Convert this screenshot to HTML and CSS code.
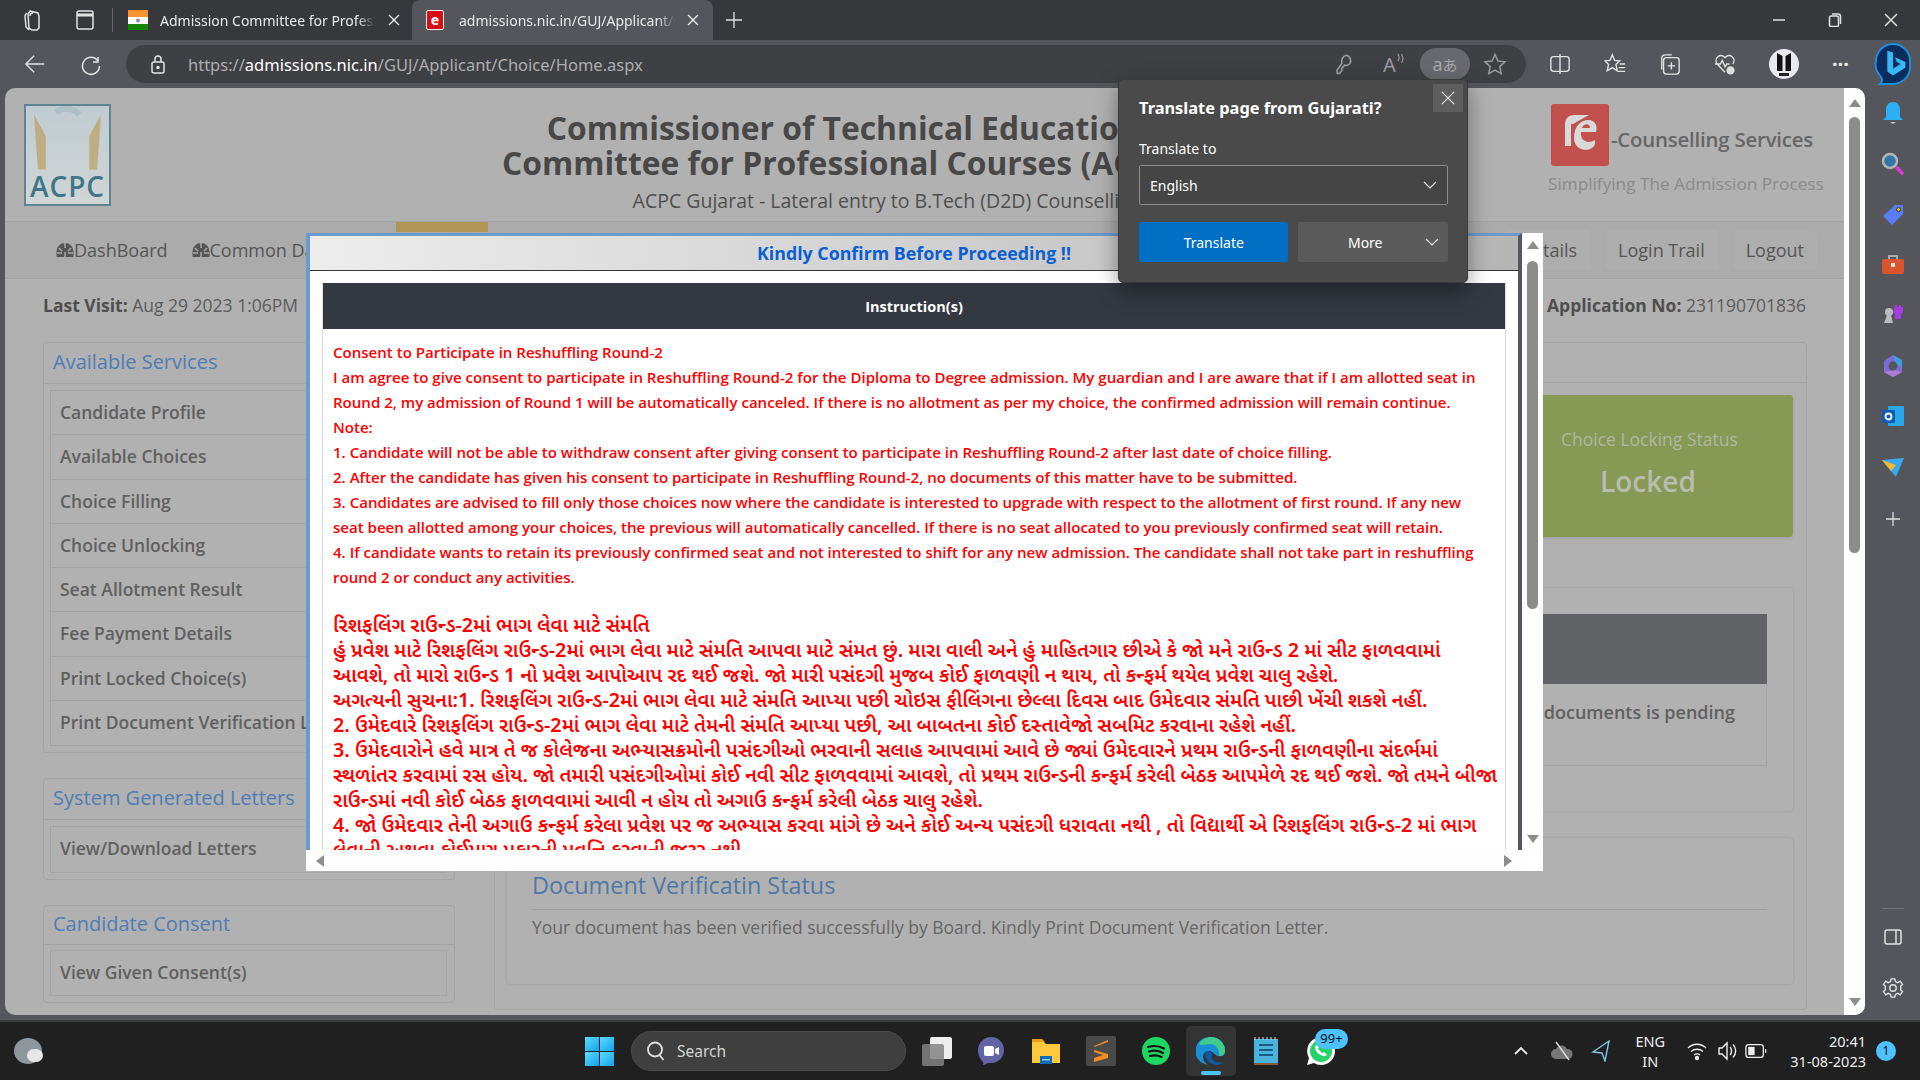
FILE: index.html
```html
<!DOCTYPE html>
<html lang="en">
<head>
<meta charset="utf-8">
<title>admissions.nic.in</title>
<link rel="stylesheet" href="styles.css">
</head>
<body>
<div class="desktop">
  <div class="tabstrip">
    <svg class="ico tab-ico1" viewBox="0 0 24 24"><path d="M10 3l8 2 1 3v12l-2 2h-5l-3-2-1-14zM6.500 5L5 8l1 11 3 3M13 5c-2 0-3 1-3 3"/></svg>
    <svg class="ico tab-ico2" viewBox="0 0 24 24"><rect x="4" y="3" width="16" height="18" rx="2"/><path d="M4 7h16" stroke-width="3"/></svg>
    <span class="tab-sep"></span>
    <div class="tab">
      <svg class="favicon" viewBox="0 0 20 20"><rect width="20" height="7" fill="#f59331"/><rect y="7" width="20" height="7" fill="#fff"/><rect y="14" width="20" height="6" fill="#138808"/><circle cx="10" cy="10.500" r="2" fill="#8a8ac0"/></svg>
      <span class="tab-title">Admission Committee for Professional</span>
      <svg class="tab-x" viewBox="0 0 12 12"><path d="M1 1l10 10M11 1L1 11"/></svg>
    </div>
    <div class="tab tab-active">
      <span class="e-fav">e</span>
      <span class="tab-title">admissions.nic.in/GUJ/Applicant/Choice</span>
      <svg class="tab-x" viewBox="0 0 12 12"><path d="M1 1l10 10M11 1L1 11"/></svg>
    </div>
    <svg class="ico new-tab" viewBox="0 0 20 20"><path d="M10 1v18M1 10h18"/></svg>
    <div class="win-ctrl">
      <svg class="ico" viewBox="0 0 14 14"><path d="M1 7h12"/></svg>
      <svg class="ico" viewBox="0 0 14 14"><rect x="1.500" y="3" width="9" height="10.500" rx="1.500"/><path d="M4 1h6c2 0 2.500 1 2.500 2.500V11"/></svg>
      <svg class="ico" viewBox="0 0 14 14"><path d="M1 1l12 12M13 1L1 13"/></svg>
    </div>
  </div>

  <div class="toolbar">
    <svg class="ico tb-back" viewBox="0 0 24 24"><path d="M22 12H3M11 3l-9 9 9 9"/></svg>
    <svg class="ico tb-refresh" viewBox="0 0 24 24"><path d="M19 5v5h-5M19 9a8.500 8.500 0 1 0 1.500 5"/></svg>
    <div class="addressbar">
      <svg class="ico lock" viewBox="0 0 20 20"><rect x="4" y="8" width="12" height="11" rx="2"/><path d="M7 8V5a3 3 0 0 1 6 0v3"/><circle cx="10" cy="13.500" r="1" fill="#ddd"/></svg>
      <span class="url">https://<b>admissions.nic.in</b>/GUJ/Applicant/Choice/Home.aspx</span>
      <svg class="ico dim key" viewBox="0 0 20 20"><path d="M12 2a5 5 0 0 1 3 8c-1 1-3 1.500-4.500 1L8 14v2l-2 2.500H4l-.5-2.500L8 9.500C7.500 6 9 3 12 2z"/></svg>
      <span class="readaloud">A<svg class="ra-waves" viewBox="0 0 10 12"><path d="M2 1c2 2 2 6 0 8M6 1c2 3 2 7 0 10"/></svg></span>
      <span class="translate-pill">a<span class="cjk">あ</span></span>
      <svg class="ico dim star" viewBox="0 0 24 24"><path d="M12 2.500l3 6.500 7 .8-5.200 4.800 1.400 7-6.200-3.600-6.200 3.600 1.400-7L2 9.800 9 9z"/></svg>
    </div>
    <div class="tb-right">
      <svg class="ico" viewBox="0 0 24 24"><rect x="2" y="4" width="20" height="16" rx="3"/><path d="M12 1v22"/></svg>
      <svg class="ico" viewBox="0 0 24 24"><path d="M9 2l2.500 6 5.500.5-4 4 1.500 7L9 16l-5.500 3.500 1.500-7-4-4L6.500 8zM17 12h6M16 16h7M15 20h8"/></svg>
      <svg class="ico" viewBox="0 0 24 24"><rect x="5" y="5" width="17" height="18" rx="3"/><path d="M3 18V6c0-2 1-4 4-4h7M13.500 10v8M9.500 14h8"/></svg>
      <svg class="ico" viewBox="0 0 24 24"><path d="M12 21L3.500 12C-1 6 7 -1 12 5c5-6 13 1 8.500 7M1 12h6l2-4 3 7 2-3h3"/><circle cx="18" cy="19" r="4.500" fill="#ddd" stroke="none"/></svg>
      <svg class="avatar" viewBox="0 0 30 30"><circle cx="15" cy="15" r="15" fill="#e8e8ee"/><path d="M8 4l5.500 3v15H8zM22 4l-5.500 3v15H22z" fill="#111"/><rect x="10" y="24" width="10" height="3" fill="#222"/></svg>
      <span class="dots">···</span>
      <svg class="bing" viewBox="0 0 40 46"><path d="M20 2a18 18 0 0 1 18 18v6a18 18 0 0 1-18 18H6c3-2 3-5 1-8a18 18 0 0 1-5-16A18 18 0 0 1 20 2z" fill="#0b2d5e" stroke="#1d8fe0" stroke-width="2"/><path d="M14 9l6 2v17l8-5-4-2-2-5 11 5v6l-13 8-6-4z" fill="#35b8f5"/></svg>
    </div>
  </div>

  <div class="main">
    <div class="page">
      <div class="page-content">
        <header class="site-header">
          <div class="acpc-logo">
            <svg class="acpc-art" viewBox="0 0 84 64"><path d="M8 8l12 22v34h-8z M76 8L64 30v34h8z" fill="#bfae84"/><path d="M30 6c8-6 18-4 24 2" fill="none" stroke="#aebfc8" stroke-width="6"/></svg>
            <span class="acpc-text">ACPC</span>
          </div>
          <div class="site-title">
            <h1>Commissioner of Technical Education, Gujarat<br>Committee for Professional Courses (ACPC), Gujarat</h1>
            <p>ACPC Gujarat - Lateral entry to B.Tech (D2D) Counselling 2023</p>
          </div>
          <div class="ec-logo">
            <div class="ec-row">
              <svg class="ec-mark" viewBox="0 0 58 62"><rect width="58" height="62" rx="3" fill="#c2504c"/><path d="M14 42V20c0-6 4-9 10-9h14l-16 9h-2v22z" fill="#d9d9d9"/><path d="M44 40c-3 9-21 8-21-6 0-13 8-18 14-18 7 0 10 6 8 12H30c-1 10 8 12 14 8zM31 24h8c0-5-6-5-8 0z" fill="#d9d9d9"/></svg>
              <span class="ec-name">-Counselling Services</span>
            </div>
            <div class="ec-tag">Simplifying The Admission Process</div>
          </div>
        </header>
        <nav class="site-nav">
          <span class="tan-strip"></span>
          <a class="nav-link"><svg class="gauge" viewBox="0 0 18 16"><path d="M9 1a8.500 8.500 0 0 0-8.500 8.500V15h17V9.500A8.500 8.500 0 0 0 9 1z" fill="#555"/><path d="M9 1v5M3 6l3 3M15 6l-3 3M1 11h5M12 11h5M9 10v5" stroke="#aaa" stroke-width="1.500"/></svg>DashBoard</a>
          <a class="nav-link"><svg class="gauge" viewBox="0 0 18 16"><path d="M9 1a8.500 8.500 0 0 0-8.500 8.500V15h17V9.500A8.500 8.500 0 0 0 9 1z" fill="#555"/><path d="M9 1v5M3 6l3 3M15 6l-3 3M1 11h5M12 11h5M9 10v5" stroke="#aaa" stroke-width="1.500"/></svg>Common Dashboard</a>
          <span class="nav-spacer"></span>
          <a class="nav-btn">Details</a>
          <a class="nav-btn">Login Trail</a>
          <a class="nav-btn">Logout</a>
        </nav>
        <div class="visit-row">
          <span><b>Last Visit:</b> Aug 29 2023 1:06PM</span>
          <span><b>Application No:</b> 231190701836</span>
        </div>
        <div class="columns">
          <aside class="left-col">
            <section class="panel">
              <h3>Available Services</h3>
              <ul class="svc">
                <li>Candidate Profile</li>
                <li>Available Choices</li>
                <li>Choice Filling</li>
                <li>Choice Unlocking</li>
                <li>Seat Allotment Result</li>
                <li>Fee Payment Details</li>
                <li>Print Locked Choice(s)</li>
                <li>Print Document Verification Letter</li>
              </ul>
            </section>
            <section class="panel">
              <h3>System Generated Letters</h3>
              <ul class="svc"><li>View/Download Letters</li></ul>
            </section>
            <section class="panel panel-last">
              <h3>Candidate Consent</h3>
              <ul class="svc"><li>View Given Consent(s)</li></ul>
            </section>
          </aside>
          <section class="right-panel">
            <div class="right-head"></div>
            <div class="status-row">
              <div class="status-card">
                <div class="status-label">Choice Locking Status</div>
                <div class="status-value">Locked</div>
              </div>
            </div>
            <div class="card pending-card">
              <div class="table-head"></div>
              <div class="table-row">documents is pending</div>
            </div>
            <div class="card verify-card">
              <h2>Document Verificatin Status</h2>
              <p>Your document has been verified successfully by Board. Kindly Print Document Verification Letter.</p>
            </div>
          </section>
        </div>
      </div>
      <div class="scrollbar page-scroll">
        <span class="arrow-up"></span><span class="thumb"></span><span class="arrow-down"></span>
      </div>
    </div>
    <aside class="sidebar">
      <svg class="side-ico" viewBox="0 0 24 24"><path d="M12 1c5 0 7 4 7 8v7l3 3H2l3-3V9c0-4 2-8 7-8z" fill="#2bb0f5"/><path d="M9 21h6l-3 2z" fill="#ccc"/></svg>
      <svg class="side-ico" viewBox="0 0 24 24"><circle cx="9" cy="9" r="7" fill="#2f78a8" stroke="#b5b5b5" stroke-width="2.500"/><path d="M15 15l7 7" stroke="#d63bd6" stroke-width="3.500"/></svg>
      <svg class="side-ico" viewBox="0 0 24 24"><path d="M2 14L14 3h8v9L11 23z" fill="#5a7df5"/><circle cx="17.500" cy="7.500" r="2" fill="#f2c400" stroke="#333"/></svg>
      <svg class="side-ico" viewBox="0 0 24 24"><path d="M8 6V3h8v3" fill="none" stroke="#aaa" stroke-width="2"/><rect x="1" y="6" width="22" height="15" rx="2" fill="#d8552e"/><rect x="10" y="10" width="4" height="4" fill="#ddd"/></svg>
      <svg class="side-ico" viewBox="0 0 24 24"><circle cx="8" cy="9" r="4" fill="#bbb"/><path d="M6 12h4l2 8H3z" fill="#bbb"/><path d="M14 2h2v2h2V2h2v2h2V2v8l-2 1v5h-6v-5l-2-1z" fill="#a43ee0"/></svg>
      <svg class="side-ico" viewBox="0 0 24 24"><path d="M3 7l9-6 9 5v12l-9 5-9-5z" fill="#7c6ad8"/><path d="M12 1l9 5v7l-6-3z" fill="#3aa0e0"/><path d="M3 18l9 5 9-5-7-2z" fill="#b27ad8"/><circle cx="12" cy="12" r="4.500" fill="#55565b"/></svg>
      <svg class="side-ico" viewBox="0 0 24 24"><rect x="7" y="2" width="16" height="20" rx="1" fill="#28a8ea"/><rect x="1" y="6" width="13" height="13" rx="1" fill="#0a5fb4"/><circle cx="7.500" cy="12.500" r="3" fill="none" stroke="#fff" stroke-width="1.800"/></svg>
      <svg class="side-ico" viewBox="0 0 24 24"><path d="M1 5l22-2-8 19-5-6z" fill="#38a8f0"/><path d="M1 5l14 5-5 6z" fill="#f5b82e"/></svg>
      <svg class="side-plus" viewBox="0 0 16 16"><path d="M8 1v14M1 8h14"/></svg>
      <span class="side-spacer"></span>
      <span class="side-rule"></span>
      <svg class="ico side-tool" viewBox="0 0 20 20"><rect x="2" y="3" width="16" height="14" rx="2"/><path d="M13 3v14"/></svg>
      <svg class="ico side-tool" viewBox="0 0 24 24"><circle cx="12" cy="12" r="3.500"/><path d="M10 2h4l.6 3 2.700 1.200 2.600-1.600 2.500 3.400-2 2 .1 2-.1 2 2 2-2.500 3.400-2.600-1.600-2.700 1.200-.6 3h-4l-.6-3-2.700-1.200-2.600 1.600L1.600 16l2-2-.1-2 .1-2-2-2 2.500-3.400 2.600 1.600L9.400 5z"/></svg>
    </aside>
  </div>

  <div class="taskbar">
    <div class="weather"><span class="weather-blob"></span></div>
    <div class="task-center">
      <span class="winlogo"><i></i><i></i><i></i><i></i></span>
      <div class="searchbox">
        <svg class="search-ico" viewBox="0 0 20 20"><circle cx="9" cy="8.500" r="7"/><path d="M13.500 14l4 5"/></svg>
        <span>Search</span>
      </div>
      <span class="taskview"><i></i><i></i></span>
      <svg class="app" viewBox="0 0 30 30"><path d="M15 1c7.500 0 13 6 13 13s-5.500 13-13 13h-2c-2 0-4 2-6 2 1-2 0-3-1-4C3 22 2 18 2 14 2 7 8 1 15 1z" fill="#6264a7"/><rect x="8" y="10" width="10" height="10" rx="2" fill="#fff"/><path d="M19 13l4-2v8l-4-2z" fill="#fff"/></svg>
      <svg class="app" viewBox="0 0 30 30"><path d="M1 5h11l3 3h14v19H1z" fill="#ffc83d"/><path d="M1 3h10l3 3H1z" fill="#e8a21a"/><rect x="9" y="20" width="12" height="8" fill="#0f6cbd"/><rect x="11" y="23" width="8" height="1.500" fill="#9cd"/></svg>
      <svg class="app" viewBox="0 0 30 30"><rect width="30" height="30" rx="2" fill="#4a4a4a"/><path d="M22 5L8 11v4l14 4v4L8 27v-4l9-3-9-3v-5l14-5z" fill="#f58a1f" transform="translate(0 -1)"/></svg>
      <svg class="app" viewBox="0 0 30 30"><circle cx="15" cy="15" r="14" fill="#1ed760"/><path d="M7 11c6-2 11-1 16 1.500M8 15.500c5-1.500 10-1 14 1.500M9 20c4-1 8-.7 11.500 1" fill="none" stroke="#111" stroke-width="2.200" stroke-linecap="round"/></svg>
      <span class="app-active">
        <svg class="app" viewBox="0 0 30 30"><path d="M15 1a14 14 0 0 1 14 14c0 5-4 6-7 5-4-1-5-5-9-5-4 0-6 3-6 6 0 3 2 6 5 8A14 14 0 0 1 15 1z" fill="#1b8fd6"/><path d="M3 8c3-5 8-7 12-7a14 14 0 0 1 14 14c0 4-3 5-6 5 1-6-3-12-9-12-5 0-9 2-11 0z" fill="#3ecb8c"/><path d="M9 17c0 6 5 12 12 12 3 0 5-2 6-3-6 1-13 0-11-8-2-3-5-3-7-1z" fill="#0c59a4"/></svg>
        <span class="app-pip"></span>
      </span>
      <svg class="app" viewBox="0 0 30 30"><rect x="3" y="3" width="24" height="25" fill="#4ab3dc"/><path d="M3 27h24v2H3z" fill="#8a5a3a"/><path d="M4 1v3M8 1v3M12 1v3M16 1v3M20 1v3M24 1v3" stroke="#ddd"/><path d="M8 9h14M8 14h14M8 19h14" stroke="#155f85" stroke-width="2.200"/></svg>
      <span class="wa">
        <svg class="app" viewBox="0 0 30 30"><path d="M15 1a14 14 0 0 1 0 28c-3 0-5-.8-7-2l-7 2 2-7A14 14 0 0 1 15 1z" fill="#fff"/><circle cx="15" cy="15" r="11" fill="#25d366"/><path d="M10 9c-2 3 0 7 3 9s6 3 8 1l-3-3-2 1-4-4 1-2z" fill="#fff"/></svg>
        <span class="wa-badge">99+</span>
      </span>
    </div>
    <div class="tray">
      <svg class="tray-ico chev" viewBox="0 0 14 14"><path d="M1 10l6-6 6 6"/></svg>
      <svg class="tray-ico cloud" viewBox="0 0 22 20"><path d="M5 18a5 5 0 0 1 0-10 6 6 0 0 1 11 0 5 5 0 0 1 1 10z" fill="#777" stroke="none"/><path d="M5 1l13 18" stroke="#ddd"/></svg>
      <svg class="tray-ico locate" viewBox="0 0 20 22"><path d="M18 1L2 12l9 1 3 8z" stroke="#7cc8e8"/></svg>
      <div class="lang"><span>ENG</span><span>IN</span></div>
      <svg class="tray-ico wifi" viewBox="0 0 20 20"><path d="M1 7c5-5 13-5 18 0M4 10.500c3.500-3 8.500-3 12 0M7 14c2-1.500 4-1.500 6 0"/><circle cx="10" cy="17" r="1.500" fill="#eee"/></svg>
      <svg class="tray-ico sound" viewBox="0 0 20 20"><path d="M1 7h3l5-5v16l-5-5H1zM12 6c2 2 2 6 0 8M15 3.500c3.500 3.500 3.500 9.500 0 13"/></svg>
      <svg class="tray-ico batt" viewBox="0 0 24 16"><rect x="1" y="1" width="19" height="14" rx="3"/><rect x="3.500" y="3.500" width="7" height="9" fill="#eee" stroke="none"/><path d="M22.500 6v4"/></svg>
      <div class="clock"><span>20:41</span><span>31-08-2023</span></div>
      <span class="notif">1</span>
    </div>
  </div>

  <div class="modal">
    <div class="modal-body">
      <div class="modal-title">Kindly Confirm Before Proceeding !!</div>
      <div class="modal-scrollarea">
        <div class="instr-head">Instruction(s)</div>
        <div class="instr">
          <div>Consent to Participate in Reshuffling Round-2</div>
          <div>I am agree to give consent to participate in Reshuffling Round-2 for the Diploma to Degree admission. My guardian and I are aware that if I am allotted seat in</div>
          <div>Round 2, my admission of Round 1 will be automatically canceled. If there is no allotment as per my choice, the confirmed admission will remain continue.</div>
          <div>Note:</div>
          <div>1. Candidate will not be able to withdraw consent after giving consent to participate in Reshuffling Round-2 after last date of choice filling.</div>
          <div>2. After the candidate has given his consent to participate in Reshuffling Round-2, no documents of this matter have to be submitted.</div>
          <div>3. Candidates are advised to fill only those choices now where the candidate is interested to upgrade with respect to the allotment of first round. If any new</div>
          <div>seat been allotted among your choices, the previous will automatically cancelled. If there is no seat allocated to you previously confirmed seat will retain.</div>
          <div>4. If candidate wants to retain its previously confirmed seat and not interested to shift for any new admission. The candidate shall not take part in reshuffling</div>
          <div>round 2 or conduct any activities.</div>
        </div>
        <div class="instr-gu" lang="gu">
          <div>રિશફલિંગ રાઉન્ડ-2માં ભાગ લેવા માટે સંમતિ</div>
          <div>હું પ્રવેશ માટે રિશફલિંગ રાઉન્ડ-2માં ભાગ લેવા માટે સંમતિ આપવા માટે સંમત છું. મારા વાલી અને હું માહિતગાર છીએ કે જો મને રાઉન્ડ 2 માં સીટ ફાળવવામાં</div>
          <div>આવશે, તો મારો રાઉન્ડ 1 નો પ્રવેશ આપોઆપ રદ થઈ જશે. જો મારી પસંદગી મુજબ કોઈ ફાળવણી ન થાય, તો કન્ફર્મ થયેલ પ્રવેશ ચાલુ રહેશે.</div>
          <div>અગત્યની સુચના:1. રિશફલિંગ રાઉન્ડ-2માં ભાગ લેવા માટે સંમતિ આપ્યા પછી ચોઇસ ફીલિંગના છેલ્લા દિવસ બાદ ઉમેદવાર સંમતિ પાછી ખેંચી શકશે નહીં.</div>
          <div>2. ઉમેદવારે રિશફલિંગ રાઉન્ડ-2માં ભાગ લેવા માટે તેમની સંમતિ આપ્યા પછી, આ બાબતના કોઈ દસ્તાવેજો સબમિટ કરવાના રહેશે નહીં.</div>
          <div>3. ઉમેદવારોને હવે માત્ર તે જ કોલેજના અભ્યાસક્રમોની પસંદગીઓ ભરવાની સલાહ આપવામાં આવે છે જ્યાં ઉમેદવારને પ્રથમ રાઉન્ડની ફાળવણીના સંદર્ભમાં</div>
          <div>સ્થળાંતર કરવામાં રસ હોય. જો તમારી પસંદગીઓમાં કોઈ નવી સીટ ફાળવવામાં આવશે, તો પ્રથમ રાઉન્ડની કન્ફર્મ કરેલી બેઠક આપમેળે રદ થઈ જશે. જો તમને બીજા</div>
          <div>રાઉન્ડમાં નવી કોઈ બેઠક ફાળવવામાં આવી ન હોય તો અગાઉ કન્ફર્મ કરેલી બેઠક ચાલુ રહેશે.</div>
          <div>4. જો ઉમેદવાર તેની અગાઉ કન્ફર્મ કરેલા પ્રવેશ પર જ અભ્યાસ કરવા માંગે છે અને કોઈ અન્ય પસંદગી ધરાવતા નથી , તો વિદ્યાર્થી એ રિશફલિંગ રાઉન્ડ-2 માં ભાગ</div>
          <div>લેવાની અથવા કોઈપણ પ્રકારની પ્રવૃત્તિ કરવાની જરૂર નથી.</div>
        </div>
      </div>
    </div>
    <div class="scrollbar modal-vscroll">
      <span class="arrow-up"></span><span class="thumb"></span><span class="arrow-down"></span>
    </div>
    <div class="modal-hscroll"><span class="arrow-left"></span><span class="arrow-right"></span></div>
    <span class="modal-corner"></span>
  </div>

  <div class="translate-pop">
    <button class="pop-close"><svg viewBox="0 0 16 16"><path d="M1 1l14 14M15 1L1 15"/></svg></button>
    <div class="pop-title">Translate page from Gujarati?</div>
    <div class="pop-label">Translate to</div>
    <div class="pop-select"><span>English</span><svg class="pop-chev" viewBox="0 0 14 8"><path d="M1 1l6 6 6-6"/></svg></div>
    <div class="pop-actions">
      <div class="pop-btn pop-primary">Translate</div>
      <div class="pop-btn pop-more"><span>More</span><svg class="pop-chev" viewBox="0 0 14 8"><path d="M1 1l6 6 6-6"/></svg></div>
    </div>
  </div>
</div>
</body>
</html>
```
FILE: styles.css
```css
* { box-sizing: border-box; }
html, body { margin: 0; padding: 0; }
body { font-family: "Open Sans", "Noto Sans", sans-serif; overflow: hidden; background: #202020; }
ul { list-style: none; margin: 0; padding: 0; }
h1, h2, h3, p { margin: 0; }
.desktop { position: relative; width: 1920px; height: 1080px; display: flex; flex-direction: column; overflow: hidden; }
.ico { fill: none; stroke: #e2e2e2; stroke-width: 1.5; flex: none; }
.ico.dim { stroke: #9a9a9e; }

/* tab strip */
.tabstrip { height: 40px; background: #37383c; display: flex; align-items: center; padding-left: 20px; font-family: "Noto Sans", sans-serif; flex: none; }
.tab-ico1 { width: 24px; height: 24px; }
.tab-ico2 { width: 24px; height: 24px; margin-left: 29px; }
.tab-sep { width: 1px; height: 24px; background: #6a6a6e; margin: 0 15px 0 15px; }
.tab { width: 284px; height: 40px; display: flex; align-items: center; color: #e8e8e8; font-size: 14px; }
.tab .favicon { width: 20px; height: 20px; margin-right: 12px; flex: none; }
.tab-title { width: 215px; overflow: hidden; white-space: nowrap; -webkit-mask-image: linear-gradient(90deg, #000 92%, transparent); mask-image: linear-gradient(90deg, #000 92%, transparent); }
.tab-x { width: 12px; height: 12px; stroke: #eee; stroke-width: 1.4; fill: none; margin-left: 13px; }
.tab-active { width: 301px; padding-left: 14px; background: #55565b; border-radius: 8px 8px 0 0; }
.e-fav { width: 18px; height: 20px; background: #d40e14; color: #fff; border: 1px solid #eee; border-radius: 2px; font-size: 14px; font-weight: 700; line-height: 17px; text-align: center; margin-right: 15px; flex: none; }
.tab-active .tab-title { width: 216px; }
.tab-active .tab-x { margin-left: 12px; }
.new-tab { width: 18px; height: 18px; margin-left: 12px; }
.win-ctrl { margin-left: auto; display: flex; gap: 42px; padding-right: 22px; }
.win-ctrl .ico { width: 14px; height: 14px; }

/* toolbar */
.toolbar { height: 48px; background: #55565b; display: flex; align-items: center; flex: none; font-family: "Noto Sans", sans-serif; }
.tb-back { width: 22px; height: 22px; margin-left: 24px; }
.tb-refresh { width: 24px; height: 24px; margin-left: 33px; }
.addressbar { width: 1400px; height: 38px; margin-left: 23px; border-radius: 19px; background: #3f4044; display: flex; align-items: center; padding-left: 22px; position: relative; }
.lock { width: 20px; height: 20px; }
.url { margin-left: 20px; font-size: 16.500px; color: #adadb0; white-space: nowrap; }
.url b { font-weight: 400; color: #fff; }
.key { width: 22px; height: 22px; margin-left: auto; margin-right: 2px; }
.readaloud { color: #9a9a9e; font-size: 20px; margin-left: 26px; width: 26px; position: relative; }
.ra-waves { position: absolute; left: 13px; top: 2px; width: 9px; height: 11px; stroke: #9a9a9e; stroke-width: 1.2; fill: none; }
.translate-pill { width: 50px; height: 32px; border-radius: 16px; background: #68696e; color: #a8a8ac; font-size: 18px; display: flex; align-items: center; justify-content: center; margin-left: 11px; }
.cjk { font-family: "Noto Sans CJK JP", sans-serif; font-size: 15px; }
.star { width: 24px; height: 24px; margin: 0 19px 0 13px; }
.tb-right { display: flex; align-items: center; margin-left: 23px; }
.tb-right .ico { width: 22px; height: 22px; margin-right: 33px; }
.avatar { width: 30px; height: 30px; margin-left: 0; flex: none; }
.dots { color: #e8e8e8; font-size: 20px; margin-left: 33px; font-weight: 700; width: 26px; line-height: 1; }
.bing { width: 38px; height: 44px; margin-left: 16px; flex: none; }

/* main */
.main { height: 932px; flex: none; background: #55565b; display: flex; padding: 0 0 5px 5px; }
.page { width: 1860px; background: #b1b1b1; border-radius: 10px; display: flex; overflow: hidden; }
.page-content { flex: 1; min-width: 0; color: #555; }

.site-header { height: 134px; display: flex; border-bottom: 1px solid #a2a2a2; padding: 16px 14px 0 19px; }
.acpc-logo { width: 87px; height: 102px; border: 2px solid #5e8590; background: linear-gradient(180deg, #c0ccd2, #d0d5d5); position: relative; text-align: center; flex: none; }
.acpc-art { position: absolute; left: 0; top: 0; width: 83px; height: 64px; }
.acpc-text { position: absolute; left: 0; right: 0; bottom: 0; font-size: 28px; font-weight: 600; color: #3f7789; letter-spacing: 1px; line-height: 36px; }
.site-title { width: 900px; flex: none; margin-left: 351px; text-align: center; white-space: nowrap; padding-top: 6px; }
.site-title h1 { font-size: 31.800px; line-height: 35px; font-weight: 700; color: #484848; }
.site-title p { font-size: 19.500px; line-height: 26px; margin-top: 8px; color: #4f4f4f; }
.ec-logo { width: 282px; flex: none; margin-left: auto; }
.ec-row { display: flex; align-items: center; padding-left: 3px; }
.ec-mark { width: 58px; height: 62px; flex: none; }
.ec-name { font-size: 20.400px; font-weight: 600; color: #666; white-space: nowrap; letter-spacing: -.2px; margin-left: 2px; padding-top: 8px; }
.ec-tag { font-size: 17.200px; color: #8b8b8b; margin-top: 6px; white-space: nowrap; }

.site-nav { height: 57px; position: relative; background: #ababab; border-bottom: 1px solid #a2a2a2; display: flex; align-items: center; padding: 0 27px 0 51px; font-size: 18px; color: #555; white-space: nowrap; }
.tan-strip { position: absolute; left: 391px; top: 0; width: 92px; height: 10px; background: #b09458; }
.nav-link { display: flex; align-items: center; margin-right: 24px; }
.gauge { width: 18px; height: 16px; flex: none; }
.nav-spacer { flex: 1; }
.nav-btn { height: 40px; line-height: 41px; padding: 0 13px; margin-left: 15px; background: #aeaeae; border-radius: 4px; }

.visit-row { height: 51px; margin-bottom: 12px; display: flex; justify-content: space-between; align-items: center; padding: 0 38px 0 38px; font-size: 17.500px; color: #5c5c5c; }
.visit-row b { font-weight: 700; color: #4f4f4f; }

.columns { display: flex; align-items: flex-start; padding-left: 38px; }
.left-col { width: 412px; flex: none; display: flex; flex-direction: column; gap: 25px; }
.panel { border: 1px solid #a5a5a5; border-radius: 4px; padding-bottom: 6px; }
.panel h3 { height: 41px; font-size: 20px; line-height: 38px; font-weight: 400; color: #4f7db5; padding-left: 9px; border-bottom: 1px solid #a5a5a5; margin-bottom: 6px; }
.panel-last h3 { height: 39px; line-height: 36px; margin-bottom: 5px; }
.svc { margin: 0 7px 0 6px; border: 1px solid #a5a5a5; }
.svc li { height: 44.300px; line-height: 43px; padding-left: 9px; font-size: 17.500px; font-weight: 600; color: #606060; border-bottom: 1px solid #a5a5a5; white-space: nowrap; overflow: hidden; }
.svc li:last-child { border-bottom: 0; }

.right-panel { width: 1313px; height: 668px; margin-left: 39px; border: 1px solid #a5a5a5; border-radius: 4px; }
.right-head { height: 40px; border-bottom: 1px solid #a5a5a5; }
.status-row { display: flex; justify-content: flex-end; padding: 12px 13px 0 0; }
.status-card { width: 400px; height: 142px; background: #889955; border-radius: 4px; padding: 32px 0 0 168px; box-shadow: 0 1px 3px rgba(0,0,0,.1); }
.status-label { font-size: 17.500px; color: #b1b7a0; white-space: nowrap; }
.status-value { font-size: 28px; font-weight: 600; color: #b9bdb0; margin-top: 12px; padding-left: 39px; line-height: 36px; }
.card { margin: 0 13px 0 12px; border-radius: 4px; background: #b1b1b1; box-shadow: 0 0 3px rgba(0,0,0,.14); }
.pending-card { height: 223px; margin-top: 51px; padding: 26px 26px 0 25px; }
.table-head { height: 70px; background: #616266; }
.table-row { height: 82px; border: 1px solid #a5a5a5; border-top: 0; text-align: right; padding: 16px 31px 0 0; font-size: 18px; font-weight: 600; color: #606060; }
.verify-card { height: 146px; margin-top: 27px; padding: 28px 26px 0 25px; }
.verify-card h2 { font-size: 23.400px; line-height: 38px; font-weight: 400; color: #4f78a8; padding-bottom: 5px; border-bottom: 1px solid #a0a0a0; }
.verify-card p { font-size: 17.500px; color: #666; margin-top: 5px; }

/* scrollbars */
.scrollbar { background: #fdfdfd; display: flex; flex-direction: column; align-items: center; }
.thumb { width: 11px; background: #8c8c8c; border-radius: 6px; }
.arrow-up { width: 0; height: 0; border: 6px solid transparent; border-top: 0; border-bottom: 8px solid #8c8c8c; }
.arrow-down { width: 0; height: 0; border: 6px solid transparent; border-bottom: 0; border-top: 8px solid #8c8c8c; }
.page-scroll { width: 21px; flex: none; padding: 11px 0 9px; }
.page-scroll .thumb { height: 436px; margin-top: 10px; }
.page-scroll .arrow-down { margin-top: auto; }

/* sidebar */
.sidebar { flex: 1; display: flex; flex-direction: column; align-items: center; padding: 13px 0 12px; position: relative; }
.side-ico { width: 24px; height: 24px; margin-bottom: 26.500px; flex: none; }
.side-plus { width: 16px; height: 16px; margin-top: 6px; stroke: #ddd; stroke-width: 1.3; fill: none; flex: none; }
.side-spacer { flex: 1; }
.side-rule { width: 22px; height: 1px; background: #707075; margin-bottom: 18px; }
.side-tool { width: 20px; height: 20px; margin-bottom: 30px; }
.side-tool:last-child { margin-bottom: 4px; width: 22px; height: 22px; }

/* taskbar */
.taskbar { height: 60px; flex: none; background: #202020; border-top: 2px solid #3c3c3e; display: flex; align-items: center; position: relative; font-family: "Noto Sans", sans-serif; color: #eee; }
.weather { width: 28px; height: 26px; border-radius: 50%; background: #8e969e; margin-left: 14px; position: relative; }
.weather-blob { position: absolute; right: -1px; bottom: 2px; width: 16px; height: 13px; background: #e6e6e6; border-radius: 7px; }
.task-center { display: flex; align-items: center; margin-left: 543px; }
.winlogo { width: 29px; height: 29px; display: grid; grid-template-columns: 1fr 1fr; gap: 1px; flex: none; }
.winlogo i { background: linear-gradient(135deg, #5fdcfb, #12a2f0); }
.searchbox { width: 275px; height: 40px; margin-left: 17px; background: #3f3f3f; border: 1px solid #4b4b4b; border-radius: 20px; display: flex; align-items: center; font-size: 15.500px; color: #d4d4d4; padding-left: 14px; }
.search-ico { width: 20px; height: 20px; fill: none; stroke: #e0e0e0; stroke-width: 1.8; margin-right: 11px; }
.taskview { width: 30px; height: 30px; margin: 0 24px 0 16px; position: relative; flex: none; }
.taskview i { position: absolute; display: block; }
.taskview i:first-child { left: 8px; top: 1px; width: 22px; height: 22px; background: #eee; border-radius: 2px; }
.taskview i:last-child { left: 0; top: 8px; width: 22px; height: 22px; background: rgba(130,130,130,.85); border-radius: 2px; }
.app { width: 30px; height: 30px; margin-right: 25px; flex: none; display: block; }
.app-active { width: 50px; height: 50px; background: #343434; border-radius: 5px; display: flex; align-items: center; justify-content: center; position: relative; margin: 0 15px 0 -10px; }
.app-active .app { margin: 0; }
.app-pip { position: absolute; left: 15px; bottom: 1px; width: 20px; height: 4px; background: #4cc2ff; border-radius: 2px; }
.wa { position: relative; flex: none; }
.wa .app { margin: 0; }
.wa-badge { position: absolute; left: 9px; top: -7px; width: 33px; height: 20px; background: #4cc2ff; color: #111; font-size: 13px; border-radius: 10px; text-align: center; line-height: 19px; }
.tray { position: absolute; right: 38px; top: 0; bottom: 0; display: flex; align-items: center; font-size: 14.500px; }
.tray-ico { fill: none; stroke: #eee; stroke-width: 1.4; flex: none; }
.chev { width: 14px; height: 14px; margin-right: 23px; stroke-width: 1.8; }
.cloud { width: 22px; height: 20px; margin-right: 18px; }
.locate { width: 20px; height: 22px; margin-right: 21px; }
.lang { width: 36px; display: flex; flex-direction: column; align-items: center; line-height: 20px; margin-right: 19px; }
.wifi { width: 20px; height: 20px; margin-right: 11px; }
.sound { width: 20px; height: 20px; margin-right: 7px; }
.batt { width: 22px; height: 16px; margin-right: 23px; }
.clock { display: flex; flex-direction: column; align-items: flex-end; line-height: 20px; white-space: nowrap; }
.notif { width: 20px; height: 20px; margin: 0 -14px 0 10px; border-radius: 50%; background: #4cc2ff; color: #111; font-size: 12px; text-align: center; line-height: 20px; flex: none; }

/* modal */
.modal { position: absolute; left: 306px; top: 233px; width: 1237px; height: 638px; display: grid; grid-template-columns: 1fr 21px; grid-template-rows: 1fr 21px; }
.modal-body { background: #fff; border: solid #6c9bcb; border-width: 3px 4px 0 4px; border-right-color: #55565b; display: flex; flex-direction: column; overflow: hidden; }
.modal-title { height: 35px; flex: none; background: linear-gradient(100deg, #ededed, #b5b5b5); border-bottom: 1px solid #333; text-align: center; color: #0b5fd0; font-weight: 700; font-size: 17.800px; line-height: 34px; white-space: nowrap; }
.modal-scrollarea { flex: 1; overflow: hidden; margin: 12px 12px 0 12px; border-left: 1px solid #ddd; border-right: 1px solid #ddd; }
.instr-head { height: 46px; background: #343841; color: #fff; font-weight: 700; font-size: 14.500px; line-height: 47px; text-align: center; }
.instr { color: #f00; font-weight: 600; font-size: 15.050px; line-height: 25px; padding: 11px 0 0 10px; white-space: nowrap; }
.instr-gu { color: #f00; font-family: "Noto Sans Gujarati", "Lohit Gujarati", "Open Sans", sans-serif; font-weight: 600; font-size: 19.800px; line-height: 25px; padding: 25px 0 0 10px; white-space: nowrap; }
.modal-vscroll { grid-row: 1; grid-column: 2; padding: 8px 0 7px; }
.modal-vscroll .thumb { height: 348px; margin-top: 12px; }
.modal-vscroll .arrow-down { margin-top: auto; }
.modal-hscroll { grid-row: 2; grid-column: 1; background: #fdfdfd; display: flex; justify-content: space-between; align-items: center; padding: 0 10px 0 10px; }
.modal-corner { background: #fff; }
.arrow-left { width: 0; height: 0; border: 6px solid transparent; border-left: 0; border-right: 8px solid #8c8c8c; }
.arrow-right { width: 0; height: 0; border: 6px solid transparent; border-right: 0; border-left: 8px solid #8c8c8c; }

/* translate */
.translate-pop { position: absolute; left: 1118px; top: 79px; width: 350px; height: 204px; background: #4a4a4a; border: 1px solid #3a3a3a; border-radius: 5px; box-shadow: 0 8px 22px rgba(0,0,0,.4); padding: 17px 19px 0 20px; color: #fff; font-family: "Noto Sans", sans-serif; }
.pop-close { position: absolute; right: 4px; top: 4px; width: 30px; height: 28px; background: #5e5e5e; border: 0; padding: 7px; display: flex; }
.pop-close svg { stroke: #eee; stroke-width: 1.2; fill: none; width: 16px; height: 14px; }
.pop-title { font-size: 16.400px; font-weight: 700; line-height: 22px; }
.pop-label { font-size: 14px; line-height: 20px; margin-top: 20px; }
.pop-select { height: 40px; margin-top: 6px; border: 1px solid #8a8a8a; border-radius: 2px; background: #454545; display: flex; align-items: center; justify-content: space-between; padding: 0 10px; font-size: 14px; }
.pop-chev { width: 14px; height: 8px; stroke: #eee; stroke-width: 1.2; fill: none; }
.pop-actions { display: flex; gap: 10px; margin-top: 17px; }
.pop-btn { width: 150px; height: 40px; font-size: 14px; display: flex; align-items: center; justify-content: center; border-radius: 2px; position: relative; }
.pop-primary { background: #0170c4; }
.pop-more { background: #5a5a5a; padding-right: 16px; }
.pop-more .pop-chev { position: absolute; right: 9px; top: 16px; }
```
